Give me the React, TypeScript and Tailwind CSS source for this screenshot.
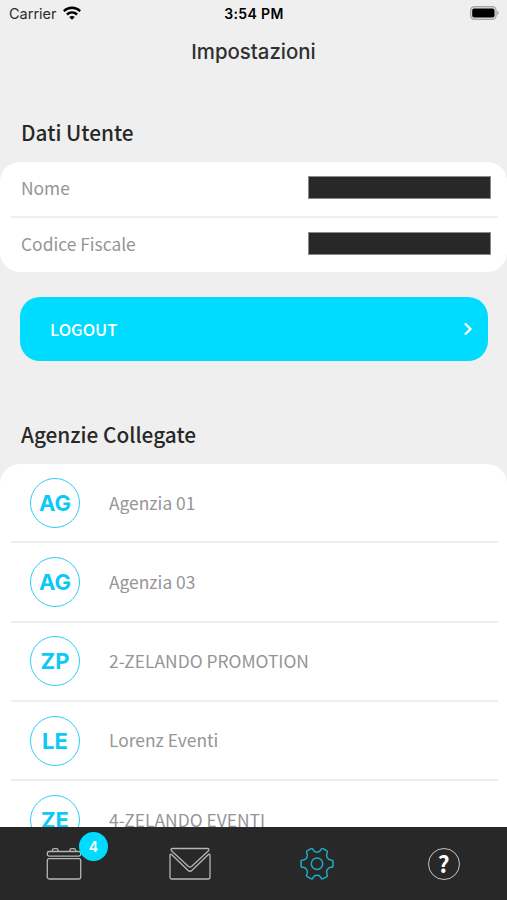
import type { ReactNode } from "react";

type Agency = { initials: string; name: string };

const agencies: Agency[] = [
  { initials: "AG", name: "Agenzia 01" },
  { initials: "AG", name: "Agenzia 03" },
  { initials: "ZP", name: "2-ZELANDO PROMOTION" },
  { initials: "LE", name: "Lorenz Eventi" },
  { initials: "ZE", name: "4-ZELANDO EVENTI" },
];

function StatusBar() {
  return (
    <div className="grid h-7 grid-cols-3 items-center pl-[9px] pr-[8px] font-['Inter',sans-serif] text-black">
      <div className="flex items-center gap-[6px]">
        <span className="text-[14.5px] leading-none text-[#2b2b2b]">Carrier</span>
        <svg className="-mt-0.5" width="18" height="14" viewBox="0 0 18 14" fill="none" stroke="currentColor" strokeWidth="2.4">
          <path d="M.8 5.1C5.5.6 12.5.6 17.2 5.1" />
          <path d="M3.9 8.5C6.900 5.700 11.100 5.700 14.100 8.5" />
          <path d="M9 13.800 6.200 11C7.900 9.500 10.100 9.500 11.800 11Z" fill="currentColor" stroke="none" />
        </svg>
      </div>
      <span className="text-center text-[14px] font-semibold leading-none tracking-[0.35px]">3:54 PM</span>
      <svg className="-mt-0.5 justify-self-end" width="29" height="14" viewBox="0 0 29 14">
        <rect x=".6" y=".6" width="25.5" height="12.8" rx="3.8" fill="#dcdcdc" stroke="#a5a5a5" strokeWidth="1.2" />
        <rect x="2.2" y="2.4" width="22.3" height="9.2" rx="2" fill="#000" />
        <path d="M27.2 4.8c1.900.8 1.900 3.600 0 4.400z" fill="#a5a5a5" />
      </svg>
    </div>
  );
}

function SectionTitle({ children }: { children: ReactNode }) {
  return <h2 className="px-[21px] text-[20.8px] font-medium leading-8 text-[#282828]">{children}</h2>;
}

function UserRow({ label }: { label: string }) {
  return (
    <div className="flex h-[54px] justify-between pl-[10px] pr-[7px]">
      <span className="pt-3 text-[17.4px] leading-7 text-[#959595]">{label}</span>
      <div className="mt-[14px] h-[23px] w-[183px] border border-[#8a8a8c] bg-[#282828]" />
    </div>
  );
}

function AgencyRow({ initials, name }: Agency) {
  return (
    <li className="flex h-[79.3px] shrink-0 items-center border-b-2 border-[#ededed] pl-[19px]">
      <div className="flex size-[50px] items-center justify-center rounded-full border-[1.5px] border-[#2ccdf5] pt-px font-['Inter',sans-serif] text-[22px] font-bold text-[#0cc9f5]">
        {initials}
      </div>
      <span className="pl-[29px] text-[17.4px] text-[#959595]">{name}</span>
    </li>
  );
}

function CalendarIcon() {
  return (
    <svg width="36" height="34" viewBox="0 0 36 34" fill="none" stroke="#b5b5b5" strokeWidth="1.3">
      <rect x="1.3" y="4.5" width="33.4" height="4.6" rx="1.8" />
      <rect x="1.3" y="11.6" width="33.4" height="20.4" rx="2" />
      <path d="M6.500 4.500V3q0-1.300 1.500-1.300h2.500q1.500 0 1.500 1.300v1.500M24 4.500V3q0-1.300 1.500-1.300h2.500q1.500 0 1.500 1.300v1.500" />
    </svg>
  );
}

function MailIcon() {
  return (
    <svg width="42" height="34" viewBox="0 0 42 34" fill="none" stroke="#b5b5b5" strokeWidth="1.3" strokeLinejoin="round">
      <path d="M3.600 1.500h34.800q2 0 1.400 1.600-.2.600-.8 1.100L22.500 19.400q-1.500 1.300-3 0L3 4.200q-.6-.5-.8-1.100-.6-1.600 1.400-1.600Z" />
      <path d="M2.300 7.300 18.900 23.200q2.100 2 4.200 0L39.700 7.300q1.300-.8 1.300 1V30q0 2-2 2H3q-2 0-2-2V8.300q0-1.800 1.300-1Z" />
    </svg>
  );
}

function GearIcon() {
  return (
    <svg width="34" height="34" viewBox="0 0 34 34" fill="none" stroke="#1caecb" strokeWidth="1.5" strokeLinejoin="round">
      <circle cx="17" cy="16.7" r="5.7" />
      <path d="M13.300 3.100C14.500 5.800 19.500 5.800 20.700 3.100 21.200 1.600 22 1.200 23 1.700L26.500 3.600C27.600 4.200 27.700 5 27.100 6.100 25.400 9 27.800 13 31 13.100 32.400 13.100 33 13.600 33 14.700V18.700C33 19.800 32.400 20.300 31 20.300 27.800 20.400 25.400 24.400 27.100 27.300 27.700 28.400 27.600 29.200 26.500 29.800L23 31.700C22 32.200 21.200 31.800 20.700 30.300 19.500 27.600 14.500 27.600 13.300 30.300 12.800 31.800 12 32.200 11 31.700L7.500 29.800C6.400 29.200 6.300 28.400 6.900 27.300 8.600 24.400 6.200 20.400 3 20.300 1.600 20.300 1 19.800 1 18.700V14.700C1 13.600 1.600 13.100 3 13.100 6.200 13 8.600 9 6.900 6.100 6.300 5 6.400 4.200 7.500 3.600L11 1.700C12 1.200 12.800 1.600 13.300 3.100Z" />
    </svg>
  );
}

function TabBar() {
  return (
    <nav className="grid h-[73px] shrink-0 grid-cols-4 items-center justify-items-center bg-[#282828]">
      <div className="relative ml-px">
        <CalendarIcon />
        <span className="absolute -top-[15px] left-[33px] flex size-[29px] items-center justify-center rounded-full bg-[#00dcff] font-['Inter',sans-serif] text-[14px] font-semibold text-white">
          4
        </span>
      </div>
      <MailIcon />
      <GearIcon />
      <div className="flex size-8 items-center justify-center rounded-full border-[1.5px] border-[#c5c5c5] text-[23px] font-bold leading-none text-white">
        ?
      </div>
    </nav>
  );
}

export default function App() {
  return (
    <div className="flex h-[900px] w-full flex-col overflow-hidden bg-[#efefef] font-['Noto_Sans_CJK_JP','Noto_Sans',sans-serif]">
      <StatusBar />
      <h1 className="pt-[10px] text-center font-['Inter',sans-serif] text-[20.4px] font-medium leading-7 text-[#303030]">
        Impostazioni
      </h1>
      <main className="flex min-h-0 flex-1 flex-col overflow-hidden pt-[50px]">
        <SectionTitle>Dati Utente</SectionTitle>
        <div className="mt-[14px] shrink-0 rounded-[20px] bg-white pl-[11px] pr-[9px]">
          <UserRow label="Nome" />
          <div className="h-0.5 bg-[#efefef]" />
          <UserRow label="Codice Fiscale" />
        </div>
        <button className="ml-[20px] mr-[19px] mt-[25px] flex h-16 shrink-0 items-center justify-between rounded-[20px] bg-[#00dcff] pl-[30px] pr-[15px] text-[16.5px] font-medium text-white">
          LOGOUT
          <svg width="10" height="14" viewBox="0 0 10 14" fill="none" stroke="currentColor" strokeWidth="2.2">
            <path d="m2 1.500 5.500 5.500L2 12.500" />
          </svg>
        </button>
        <div className="pt-[57px]">
          <SectionTitle>Agenzie Collegate</SectionTitle>
        </div>
        <ul className="mt-[14px] flex min-h-0 flex-1 flex-col overflow-hidden rounded-t-[20px] bg-white pl-[11px] pr-[9px]">
          {agencies.map((agency) => (
            <AgencyRow key={agency.name} {...agency} />
          ))}
        </ul>
      </main>
      <TabBar />
    </div>
  );
}
